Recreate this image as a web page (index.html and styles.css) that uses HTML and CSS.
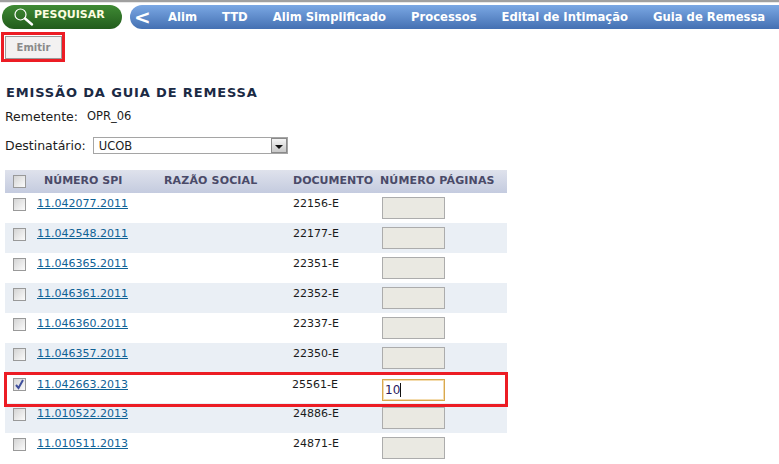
FILE: index.html
```html
<!DOCTYPE html>
<html lang="pt">
<head>
<meta charset="utf-8">
<title>Emissão da Guia de Remessa</title>
<link rel="stylesheet" href="styles.css">
</head>
<body>
<div class="topline"></div>
<header class="top">
  <a class="search">
    <svg class="lens" width="22" height="20" viewBox="0 0 22 20"><circle cx="7.5" cy="7.5" r="5.5" fill="none" stroke="#fff" stroke-width="1.2"/><path d="M12 11.5l7 6" stroke="#fff" stroke-width="2.4" stroke-linecap="round"/></svg>
    <span>PESQUISAR</span>
  </a>
  <nav class="nav">
    <span class="back">&lt;</span>
    <a>Alim</a>
    <a>TTD</a>
    <a>Alim Simplificado</a>
    <a>Processos</a>
    <a>Edital de Intimação</a>
    <a>Guia de Remessa</a>
  </nav>
</header>
<div class="actions"><button class="emit">Emitir</button></div>
<h1>EMISSÃO DA GUIA DE REMESSA</h1>
<div class="field sender"><span class="lbl">Remetente:</span><span class="val">OPR_06</span></div>
<div class="field dest">
  <span class="lbl">Destinatário:</span>
  <div class="select"><span>UCOB</span><i class="arrow"><b></b></i></div>
</div>
<div class="table">
  <div class="row head">
    <div class="c0"><i class="cb"></i></div><div class="c1">NÚMERO SPI</div><div class="c2">RAZÃO SOCIAL</div><div class="c3">DOCUMENTO</div><div class="c4">NÚMERO PÁGINAS</div>
  </div>
  <div class="row"><div class="c0"><i class="cb"></i></div><div class="c1"><a>11.042077.2011</a></div><div class="c2"></div><div class="c3">22156-E</div><div class="c4"><i class="inp"></i></div></div>
  <div class="row alt"><div class="c0"><i class="cb"></i></div><div class="c1"><a>11.042548.2011</a></div><div class="c2"></div><div class="c3">22177-E</div><div class="c4"><i class="inp"></i></div></div>
  <div class="row"><div class="c0"><i class="cb"></i></div><div class="c1"><a>11.046365.2011</a></div><div class="c2"></div><div class="c3">22351-E</div><div class="c4"><i class="inp"></i></div></div>
  <div class="row alt"><div class="c0"><i class="cb"></i></div><div class="c1"><a>11.046361.2011</a></div><div class="c2"></div><div class="c3">22352-E</div><div class="c4"><i class="inp"></i></div></div>
  <div class="row"><div class="c0"><i class="cb"></i></div><div class="c1"><a>11.046360.2011</a></div><div class="c2"></div><div class="c3">22337-E</div><div class="c4"><i class="inp"></i></div></div>
  <div class="row alt"><div class="c0"><i class="cb"></i></div><div class="c1"><a>11.046357.2011</a></div><div class="c2"></div><div class="c3">22350-E</div><div class="c4"><i class="inp"></i></div></div>
  <div class="row sel"><div class="c0"><i class="cb"><svg width="11" height="11" viewBox="0 0 11 11"><path d="M2 6l2.5 3L9 1" fill="none" stroke="#3f4f9c" stroke-width="2"/></svg></i></div><div class="c1"><a>11.042663.2013</a></div><div class="c2"></div><div class="c3">25561-E</div><div class="c4"><i class="inp focus"><span>10</span><u></u></i></div></div>
  <div class="row alt"><div class="c0"><i class="cb"></i></div><div class="c1"><a>11.010522.2013</a></div><div class="c2"></div><div class="c3">24886-E</div><div class="c4"><i class="inp"></i></div></div>
  <div class="row"><div class="c0"><i class="cb"></i></div><div class="c1"><a>11.010511.2013</a></div><div class="c2"></div><div class="c3">24871-E</div><div class="c4"><i class="inp"></i></div></div>
</div>
<div class="mark mark-emit"></div>
<div class="mark mark-row"></div>
</body>
</html>
```
FILE: styles.css
```css
* { box-sizing: border-box; }
html, body { margin: 0; height: 464px; overflow: hidden; background: #fff; }
body { position: relative; font-family: "DejaVu Sans", Verdana, sans-serif; font-size: 11px; color: #1c1c1c; }
.topline { height: 3px; background: #a0a0a0; border-bottom: 1px solid #e8e8e8; }
.top { display: flex; height: 25px; margin-top: 2px; padding-left: 2px; }
.search { flex: none; position: relative; display: flex; width: 120px; height: 24px; padding: 1px 0 0 11px; border-radius: 12px; background: linear-gradient(#3f8a34, #225c1c); color: #fff; font-weight: bold; font-size: 11px; }
.search span { margin-left: -1px; line-height: 18px; color: #fdfde0; }
.lens { margin-top: 1px; }
.nav { flex: 1; display: flex; align-items: center; gap: 25px; height: 24px; margin-left: 8px; border-radius: 12px 0 0 12px; background: linear-gradient(#7ba8e4, #4470b2); color: #fff; font-family: "DejaVu Sans", sans-serif; font-weight: bold; font-size: 11.6px; white-space: nowrap; overflow: hidden; }
.back { width: 13px; margin-right: -4px; margin-left: 4px; font-size: 20px; line-height: 24px; }
.actions { padding: 6px 0 0 5px; }
.emit { display: block; width: 57px; height: 23px; padding: 0; border: 1px solid #9a9a9a; outline: 1px solid #f2f0f0; outline-offset: -2px; background: #f3f1f1; color: #8a8a8a; font: bold 10px "DejaVu Sans", sans-serif; }
h1 { margin: 26px 0 0 6px; font-size: 13px; line-height: 16px; font-weight: bold; color: #1b2a44; letter-spacing: 0.85px; }
.field { display: flex; align-items: center; padding-left: 5px; }
.sender { height: 16px; margin-top: 7px; }
.sender .val { margin-left: 9px; font-size: 11.5px; }
.lbl { font-size: 12.5px; }
.dest { height: 17px; margin-top: 13px; }
.select { display: flex; align-items: center; justify-content: space-between; width: 195px; height: 17px; margin-left: 7px; padding: 0 0 0 5px; border: 1px solid #a5a5a5; font-size: 11.5px; color: #222; }
.arrow { display: flex; align-items: center; justify-content: center; width: 16px; height: 15px; border: 1px solid #8a8a8a; background: linear-gradient(#f4f4f4, #c8c8c8); }
.arrow b { margin-top: 3px; border: 4px solid transparent; border-top: 4px solid #111; border-bottom: 0; }
.table { width: 502px; margin: 16px 0 0 5px; }
.row { display: flex; height: 30px; background: #fff; }
.row.alt { background: #eaeff5; }
.row.head { height: 23px; align-items: center; background: linear-gradient(#dfe2ec, #c4cbdf); font-weight: bold; color: #4a4a68; font-size: 11px; }
.row > div { flex: none; white-space: nowrap; }
.c0 { width: 32px; padding-left: 8px; }
.c1 { width: 127px; }
.c2 { width: 129px; }
.c3 { width: 87px; }
.c4 { width: 127px; }
.head .c1 { padding-left: 7px; }
.head .c1, .head .c2, .head .c3, .head .c4 { padding-bottom: 2px; }
.head .c2, .head .c4 { letter-spacing: 0.15px; }
.row:not(.head) > .c1, .row:not(.head) > .c3 { padding-top: 4px; line-height: 14px; font-size: 11px; color: #1a1a1a; }
.row:not(.head) > .c0 { padding-top: 5px; }
.row:not(.head) > .c4 { padding: 4px 0 0 2px; }
.row.sel > .c4 { padding-top: 6px; }
.row.sel > .c1, .row.sel > .c3 { padding-top: 5px; }
.row.sel > .c3 { margin-left: -1px; margin-right: 1px; }
.head .c0 { padding-top: 5px; height: 100%; }
.c1 a { color: #0f6296; text-decoration: underline; }
.cb { display: block; width: 13px; height: 13px; border: 1px solid #999; background: linear-gradient(135deg, #d4d4d4, #fbfbfb); }
.cb svg { display: block; }
.inp { display: block; width: 63px; height: 22px; border: 1px solid #acacac; background: #eae9e2; }
.inp.focus { position: relative; display: flex; align-items: center; padding-left: 2px; border: 1px solid #d8a84e; box-shadow: inset 0 0 0 1px #f4dcae; background: #fff; font-style: normal; font-size: 12px; color: #2a1a60; }
.inp.focus u { display: block; width: 1px; height: 14px; background: #111; }
.mark { position: absolute; border: 3px solid #ec1c24; pointer-events: none; }
.mark-emit { left: 1px; top: 32px; width: 64px; height: 30px; }
.mark-row { left: 4px; top: 372px; width: 504px; height: 35px; }
```
